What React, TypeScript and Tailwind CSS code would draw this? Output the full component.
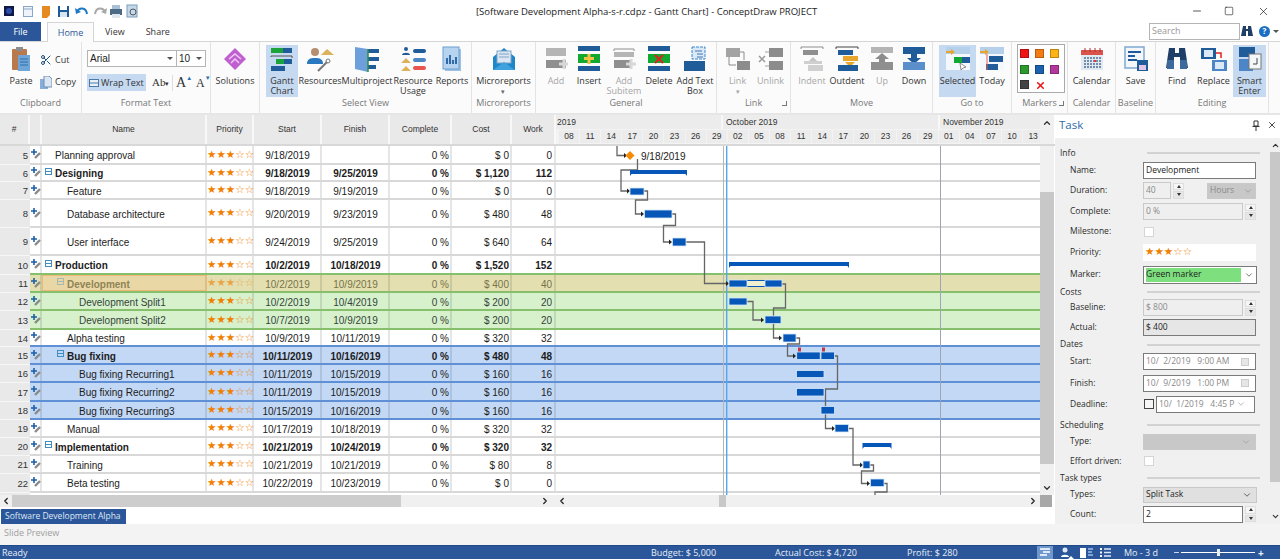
import type { ReactNode } from "react";
import { ChevronDown, ChevronLeft, ChevronRight, ChevronUp, Minus, Scissors, Square, X } from "lucide-react";

const navy = "#1f5c99";

const Ico = ({ w = 30, h = 26, children }: { w?: number; h?: number; children: ReactNode }) => (
	<svg width={w} height={h} viewBox={`0 0 ${w} ${h}`} className="shrink-0">
		{children}
	</svg>
);

const BigButton = ({ w, label, icon, active, muted }: { w: string; label: ReactNode; icon: ReactNode; active?: boolean; muted?: boolean }) => (
	<div className={`${w} h-[52px] flex flex-col items-center shrink-0 ${active ? "bg-[#c5d9f1]" : ""}`}>
		<div className="h-[27px] flex items-center justify-center">{icon}</div>
		<div className={`mt-[4px] text-center leading-[10px] whitespace-nowrap ${muted ? "text-[#a6a6a6]" : "text-[#333]"}`}>{label}</div>
	</div>
);

const Group = ({ w, label, children, launcher, pad = "pl-[4px]" }: { w: string; label: string; children: ReactNode; launcher?: boolean; pad?: string }) => (
	<div className={`${w} shrink-0 h-full flex flex-col border-r border-[#e3e3e3] relative`}>
		<div className={`h-[55px] flex pt-[3px] ${pad}`}>{children}</div>
		<div className="text-center text-[#777] leading-[12px]">{label}</div>
		{launcher && <div className="absolute right-[3px] bottom-[7px] w-[5px] h-[5px] border-r border-b border-[#777]" />}
	</div>
);

const MarkerDot = ({ c }: { c: string }) => <div className={`w-[9px] h-[9px] border border-black/25 ${c}`} />;

const Ribbon = () => (
	<div className="h-[71px] flex bg-[#fbfbfb] text-[9px] font-['Open_Sans',sans-serif]">
		<Group w="w-[82px]" label="Clipboard" pad="pl-[2px]">
			<BigButton
				w="w-[38px]"
				label="Paste"
				icon={
					<Ico w={22} h={26}>
						<rect x="2" y="3" width="15" height="21" rx="1" fill="#b9794c" />
						<rect x="6" y="1" width="7" height="4" fill="#8d8d8d" />
						<rect x="8" y="9" width="12" height="16" fill="#6fa5d8" />
						<path d="M10 13h8M10 16h8M10 19h8" stroke="#2f6ca8" />
					</Ico>
				}
			/>
			<div className="flex flex-col gap-[8px] pt-[8px] text-[#333]">
				<div className="flex items-center gap-[3px] h-[14px]">
					<Scissors size={12} className="text-[#1f4f80]" />
					<span>Cut</span>
				</div>
				<div className="flex items-center gap-[3px] h-[14px]">
					<Ico w={12} h={13}>
						<rect x="0" y="3" width="8" height="10" fill="#87aedb" />
						<path d="M4 0h5l3 3v8H4z" fill="#dbe6f2" stroke="#6e8fb3" />
					</Ico>
					<span>Copy</span>
				</div>
			</div>
		</Group>
		<Group w="w-[129px]" label="Format Text" pad="pl-[5px]">
			<div className="flex flex-col">
				<div className="mt-[5px] w-[119px] h-[17px] flex border border-[#b5b5b5] bg-white font-['Liberation_Sans',sans-serif] text-[10px] text-[#222]">
					<div className="w-[89px] flex items-center justify-between pl-[2px] pr-[3px] border-r border-[#b5b5b5]">
						Arial
						<span className="border-x-[3px] border-t-[3px] border-x-transparent border-t-[#555]" />
					</div>
					<div className="flex-1 flex items-center justify-between pl-[2px] pr-[3px]">
						10
						<span className="border-x-[3px] border-t-[3px] border-x-transparent border-t-[#555]" />
					</div>
				</div>
				<div className="mt-[7px] h-[17px] flex items-center text-[#333]">
					<div className="w-[59px] h-full bg-[#c5d9f1] flex items-center gap-[1px] pl-[2px] text-[9px] whitespace-nowrap">
						<Ico w={11} h={10}>
							<rect x="0.5" y="1.5" width="9" height="7" fill="#e8f0f8" stroke="#4d7aa8" />
							<path d="M1 5h8" stroke="#4d7aa8" />
						</Ico>
						Wrap Text
					</div>
					<span className="ml-[6px] font-['Liberation_Serif',serif] text-[11px] w-[18px]">Ab<span className="text-[7px]">▾</span></span>
					<div className="w-px h-[16px] bg-[#ddd] ml-[2px]" />
					<span className="ml-[3px] font-['Liberation_Serif',serif] text-[14px] leading-none">A</span>
					<span className="text-[6px] text-[#2b6cb0] -mt-[8px]">▲</span>
					<span className="ml-[4px] font-['Liberation_Serif',serif] text-[12px] leading-none">A</span>
					<span className="text-[6px] text-[#2b6cb0] -mt-[8px]">▼</span>
				</div>
			</div>
		</Group>
		<Group w="w-[49px]" label="" pad="pl-0">
			<BigButton
				w="w-full"
				label="Solutions"
				icon={
					<Ico w={22} h={22}>
						<path d="M11 0l11 11-11 11L0 11z" fill="#bf5fd0" />
						<path d="M5 11l6-5 6 5M7 15l4-4 4 4" stroke="#f0c9f6" strokeWidth="1.5" fill="none" />
					</Ico>
				}
			/>
		</Group>
		<Group w="w-[212px]" label="Select View" pad="pl-[6px]">
			<BigButton
				w="w-[32px]"
				active
				label={<>Gantt<br />Chart</>}
				icon={
					<Ico w={24} h={26}>
						<rect x="1" y="2" width="21" height="5" fill={navy} />
						<rect x="1" y="2" width="12" height="5" fill="#1aa33a" />
						<path d="M1 11v-1h21v2" stroke="#555" fill="none" />
						<rect x="6" y="13" width="16" height="5" fill={navy} />
						<rect x="6" y="13" width="8" height="5" fill="#1aa33a" />
						<rect x="1" y="20" width="14" height="5" fill={navy} />
					</Ico>
				}
			/>
			<BigButton
				w="w-[44px]"
				label="Resources"
				icon={
					<Ico w={28} h={26}>
						<circle cx="9" cy="6" r="4" fill="#b58d6f" />
						<path d="M1 18c0-5 3-6 8-6s8 1 8 6z" fill="#2a78c0" />
						<path d="M15 9l6-6 7 6z" fill="#dcb25a" />
						<path d="M12 25l9-9" stroke="#777" strokeWidth="2" />
						<circle cx="22" cy="15" r="2" fill="none" stroke="#777" />
					</Ico>
				}
			/>
			<BigButton
				w="w-[50px]"
				label="Multiproject"
				icon={
					<Ico w={26} h={26}>
						<rect x="13" y="3" width="12" height="4" fill={navy} />
						<rect x="13" y="11" width="12" height="4" fill={navy} />
						<rect x="13" y="19" width="9" height="4" fill={navy} />
						<path d="M1 1l13 2v23L1 23z" fill="#6d9fdc" />
						<path d="M14 3v23" stroke="#2f8f45" strokeWidth="1.5" />
					</Ico>
				}
			/>
			<BigButton
				w="w-[42px]"
				label={<>Resource<br />Usage</>}
				icon={
					<Ico w={26} h={26}>
						<circle cx="6" cy="3" r="2" fill={navy} />
						<path d="M2 9c0-3 8-3 8 0z" fill={navy} />
						<path d="M1 17l5-5 5 5zM1 25l5-5 5 5z" fill="#dcb25a" />
						<rect x="13" y="3" width="13" height="4" rx="2" fill={navy} />
						<rect x="13" y="12" width="13" height="4" rx="2" fill="#4c86c6" />
						<rect x="13" y="20" width="13" height="4" rx="2" fill="#e8564f" />
					</Ico>
				}
			/>
			<BigButton
				w="w-[36px]"
				label="Reports"
				icon={
					<Ico w={20} h={26}>
						<rect x="3" y="3" width="16" height="22" fill="#9ec0e4" />
						<rect x="1" y="1" width="16" height="22" fill="#b6d3ef" stroke="#6d9fd0" />
						<path d="M5 18v-6M8 18v-9M11 18v-4M14 18v-7" stroke="#2e6aa8" strokeWidth="2" />
					</Ico>
				}
			/>
		</Group>
		<Group w="w-[64px]" label="Microreports" pad="pl-0">
			<BigButton
				w="w-full"
				label={<>Microreports<br /><span className="text-[7px] text-[#666]">▾</span></>}
				icon={
					<Ico w={24} h={24}>
						<path d="M1 10L12 1l11 9v13H1z" fill="#1f86c8" />
						<rect x="5" y="4" width="14" height="12" fill="#dbe6f2" stroke="#7ea6c8" />
						<path d="M7 7h10M7 10h10" stroke="#7ea6c8" />
						<path d="M1 23l11-8 11 8z" fill="#3fa1dd" />
					</Ico>
				}
			/>
		</Group>
		<Group w="w-[181px]" label="General">
			<BigButton
				w="w-[32px]"
				muted
				label="Add"
				icon={
					<Ico w={24} h={24}>
						<rect x="2" y="1" width="20" height="8" fill="#b5b5b5" />
						<rect x="2" y="13" width="20" height="8" fill="#8f8f8f" />
						<path d="M20 12v10M15 17h10" stroke="#d8d8d8" strokeWidth="3" />
					</Ico>
				}
			/>
			<BigButton
				w="w-[34px]"
				label="Insert"
				icon={
					<Ico w={24} h={26}>
						<rect x="1" y="0" width="22" height="5" fill={navy} />
						<rect x="1" y="8" width="22" height="9" fill="#12a930" />
						<rect x="1" y="20" width="22" height="5" fill={navy} />
						<path d="M12 8v10M7 12.5h10" stroke="#f5c242" strokeWidth="3" />
					</Ico>
				}
			/>
			<BigButton
				w="w-[36px]"
				muted
				label={<>Add<br />Subitem</>}
				icon={
					<Ico w={24} h={24}>
						<path d="M2 4V2h20v2" stroke="#8f8f8f" fill="none" />
						<rect x="2" y="5" width="20" height="5" fill="#b5b5b5" />
						<rect x="2" y="13" width="16" height="8" fill="#8f8f8f" />
						<path d="M19 12v10M14 17h10" stroke="#d8d8d8" strokeWidth="3" />
					</Ico>
				}
			/>
			<BigButton
				w="w-[34px]"
				label="Delete"
				icon={
					<Ico w={24} h={26}>
						<rect x="1" y="0" width="22" height="5" fill={navy} />
						<rect x="1" y="8" width="22" height="9" fill="#12a930" />
						<rect x="1" y="20" width="22" height="5" fill={navy} />
						<path d="M8 9l8 8M16 9l-8 8" stroke="#e32020" strokeWidth="2" />
					</Ico>
				}
			/>
			<BigButton
				w="w-[38px]"
				label={<>Add Text<br />Box</>}
				icon={
					<Ico w={24} h={26}>
						<rect x="9" y="1" width="13" height="12" fill="#dbe9f6" stroke="#3c86d0" strokeDasharray="3 1" />
						<path d="M12 5h7M14 8h6M14 11h6" stroke="#3c78b0" />
						<rect x="1" y="15" width="21" height="10" fill={navy} />
					</Ico>
				}
			/>
		</Group>
		<Group w="w-[74px]" label="Link" launcher pad="pl-[4px]">
			<BigButton
				w="w-[33px]"
				muted
				label={<>Link<br /><span className="text-[7px]">▾</span></>}
				icon={
					<Ico w={26} h={26}>
						<rect x="1" y="2" width="14" height="9" fill="#a3a3a3" />
						<rect x="12" y="15" width="13" height="9" fill="#8c8c8c" />
						<path d="M15 6h4v8M4 11v8h7" stroke="#8c8c8c" fill="none" />
					</Ico>
				}
			/>
			<BigButton
				w="w-[33px]"
				muted
				label="Unlink"
				icon={
					<Ico w={26} h={26}>
						<rect x="11" y="2" width="14" height="9" fill="#8c8c8c" />
						<rect x="11" y="15" width="14" height="9" fill="#8c8c8c" />
						<path d="M1 10l6 6M7 10l-6 6" stroke="#9a9a9a" strokeWidth="1.5" />
						<path d="M11 6H7M11 20H7" stroke="#a3a3a3" />
					</Ico>
				}
			/>
		</Group>
		<Group w="w-[142px]" label="Move">
			<BigButton
				w="w-[34px]"
				muted
				label="Indent"
				icon={
					<Ico w={24} h={26}>
						<path d="M1 3V1h22v2" stroke="#8f8f8f" fill="none" />
						<rect x="3" y="4" width="15" height="5" fill="#8f8f8f" />
						<rect x="8" y="19" width="15" height="6" fill="#d0d0d0" />
						<path d="M13 11l5 5H8z" fill="#c4c4c4" />
						<rect x="4" y="15" width="18" height="3" fill="#cfcfcf" />
					</Ico>
				}
			/>
			<BigButton
				w="w-[36px]"
				label="Outdent"
				icon={
					<Ico w={24} h={26}>
						<path d="M1 3V1h22v2" stroke="#444" fill="none" />
						<rect x="3" y="4" width="15" height="5" fill={navy} />
						<rect x="8" y="10" width="15" height="5" fill="#e8a52c" />
						<path d="M15 21l-5-5h10z" fill="#e8a52c" />
						<rect x="3" y="19" width="20" height="6" fill={navy} />
					</Ico>
				}
			/>
			<BigButton
				w="w-[34px]"
				muted
				label="Up"
				icon={
					<Ico w={24} h={24}>
						<rect x="1" y="0" width="22" height="6" fill="#b5b5b5" />
						<path d="M12 6l7 6h-4v4H9v-4H5z" fill="#8c8c8c" />
						<rect x="1" y="15" width="22" height="8" fill="#8f8f8f" />
					</Ico>
				}
			/>
			<BigButton
				w="w-[30px]"
				label="Down"
				icon={
					<Ico w={24} h={24}>
						<rect x="1" y="0" width="22" height="7" fill={navy} />
						<path d="M12 17l7-6h-4V7H9v4H5z" fill={navy} />
						<rect x="1" y="15" width="22" height="8" fill="#5a8fcb" />
					</Ico>
				}
			/>
		</Group>
		<Group w="w-[79px]" label="Go to" pad="pl-[6px]">
			<BigButton
				w="w-[37px]"
				active
				label="Selected"
				icon={
					<Ico w={26} h={26}>
						<rect x="1" y="1" width="24" height="23" fill="#f4f7fb" />
						<rect x="1" y="1" width="24" height="7" fill="#b5d0ea" />
						<path d="M1 5h5V3l4 3-4 3V7H1z" fill="#e8a52c" />
						<rect x="9" y="11" width="16" height="6" fill={navy} />
						<rect x="9" y="11" width="8" height="6" fill="#12a930" />
						<path d="M15 17l1 7 2-2 3-1z" fill="#fff" stroke="#444" strokeWidth="0.6" />
					</Ico>
				}
			/>
			<BigButton
				w="w-[32px]"
				label="Today"
				icon={
					<Ico w={26} h={26}>
						<rect x="1" y="1" width="24" height="23" fill="#f4f7fb" />
						<rect x="1" y="1" width="24" height="7" fill="#b5d0ea" />
						<path d="M1 5h5V3l4 3-4 3V7H1z" fill="#e8a52c" />
						<rect x="10" y="10" width="14" height="6" fill={navy} />
						<rect x="7" y="18" width="12" height="6" fill={navy} />
						<path d="M8 8v16" stroke="#e8604f" />
					</Ico>
				}
			/>
		</Group>
		<Group w="w-[56px]" label="Markers" launcher pad="pl-[5px]">
			<div className="w-[48px] h-[49px] border border-[#aaa] bg-white grid grid-cols-[15px_15px_15px] gap-y-[6px] pl-[2px] pt-[4px] -mt-[1px]">
				<MarkerDot c="bg-[#f01414]" />
				<MarkerDot c="bg-[#f47c14]" />
				<MarkerDot c="bg-[#fbb414]" />
				<MarkerDot c="bg-[#2e9a2e]" />
				<MarkerDot c="bg-[#1c62ae]" />
				<MarkerDot c="bg-[#b4389c]" />
				<MarkerDot c="bg-[#444]" />
				<X size={11} strokeWidth={3.5} className="text-[#e81818]" />
			</div>
		</Group>
		<Group w="w-[48px]" label="Calendar" pad="pl-0">
			<BigButton
				w="w-full"
				label="Calendar"
				icon={
					<Ico w={24} h={24}>
						<rect x="1" y="3" width="22" height="20" fill="#e3e9f1" />
						<rect x="1" y="3" width="22" height="5" fill="#d9534a" />
						<path d="M5 1v4M10 1v4M15 1v4M20 1v4" stroke="#a33" />
						<path d="M4 11h17M4 14h17M4 17h17M4 20h17" stroke="#4f6f98" strokeWidth="1.6" strokeDasharray="2 1" />
						<rect x="14" y="13" width="2" height="2" fill="#e33" />
					</Ico>
				}
			/>
		</Group>
		<Group w="w-[40px]" label="Baseline" pad="pl-0">
			<BigButton
				w="w-full"
				label="Save"
				icon={
					<Ico w={24} h={26}>
						<rect x="1" y="1" width="19" height="21" fill="#f3f7fb" stroke="#7fa9cf" strokeWidth="1.5" />
						<path d="M4 6h13M4 10h7M4 14h9" stroke={navy} strokeWidth="2" />
						<rect x="13" y="14" width="11" height="11" fill={navy} />
						<rect x="15" y="19" width="7" height="5" fill="#e2c6e8" />
					</Ico>
				}
			/>
		</Group>
		<Group w="w-[113px]" label="Editing">
			<BigButton
				w="w-[34px]"
				label="Find"
				icon={
					<Ico w={22} h={24}>
						<path d="M3 1h6v5h4V1h6l3 20h-8V10h-6v11H0z" fill="#1f3f66" />
						<rect x="1" y="13" width="7" height="9" fill="#3d6a9c" />
						<rect x="14" y="13" width="7" height="9" fill="#3d6a9c" />
					</Ico>
				}
			/>
			<BigButton
				w="w-[39px]"
				label="Replace"
				icon={
					<Ico w={26} h={24}>
						<rect x="0" y="1" width="15" height="11" fill={navy} />
						<rect x="3" y="3" width="9" height="7" fill="#dbe9f6" />
						<rect x="11" y="13" width="15" height="11" fill="#4c86c6" />
						<rect x="14" y="15" width="9" height="7" fill="#dbe9f6" />
						<path d="M15 6h5v5" stroke="#e32020" strokeWidth="1.5" fill="none" />
					</Ico>
				}
			/>
			<BigButton
				w="w-[33px]"
				active
				label={<>Smart<br />Enter</>}
				icon={
					<Ico w={24} h={26}>
						<rect x="1" y="1" width="16" height="10" fill={navy} />
						<rect x="1" y="13" width="14" height="12" fill="#4c86c6" />
						<rect x="11" y="8" width="12" height="15" fill="#f5f8fb" stroke="#777" />
						<path d="M19 12v6h-4" stroke="#444" fill="none" />
					</Ico>
				}
			/>
		</Group>
	</div>
);

const TopBar = () => (
	<div className="h-[22px] flex items-center relative font-['Open_Sans',sans-serif]">
		<div className="flex items-center pl-[4px] gap-[6px]">
			<Ico w={134} h={14}>
				<rect x="0" y="2" width="10" height="10" fill="#101a4a" />
				<circle cx="5" cy="7" r="3" fill="#2c4da8" />
				<rect x="19.5" y="2.5" width="9" height="10" fill="#eef4fa" stroke="#8aa8c6" />
				<path d="M20 5h8" stroke="#8aa8c6" />
				<path d="M38 2h8v9l-3 3h-5z" fill="#e58a22" />
				<rect x="54" y="2" width="11" height="11" fill="#1d5a9c" />
				<rect x="56" y="2" width="7" height="4" fill="#fff" />
				<rect x="56" y="8" width="7" height="5" fill="#d8e4f0" />
				<path d="M73 8c2-5 9-5 10 2" stroke="#1f7ac4" strokeWidth="2" fill="none" />
				<path d="M71 4l1 6 5-2z" fill="#1f7ac4" />
				<path d="M101 8c-2-5-9-5-10 2" stroke="#a8a8a8" strokeWidth="2" fill="none" />
				<path d="M103 4l-1 6-5-2z" fill="#a8a8a8" />
				<rect x="106" y="5" width="12" height="6" fill="#4c6a86" />
				<rect x="108" y="1" width="8" height="4" fill="#a9c0d6" />
				<rect x="108" y="10" width="8" height="4" fill="#dde6ee" />
				<rect x="123" y="1" width="10" height="12" fill="#c4d8ec" stroke="#7e9cba" />
				<circle cx="129" cy="8" r="3" fill="none" stroke="#555" />
			</Ico>
		</div>
		<div className="absolute left-[476px] top-[5px] text-[9.5px] text-[#222] whitespace-nowrap">
			[Software Development Alpha-s-r.cdpz - Gantt Chart] - ConceptDraw PROJECT
		</div>
		<div className="ml-auto flex items-center gap-[21px] pr-[10px] text-[#222]">
			<Minus size={12} strokeWidth={1.5} />
			<Square size={10} strokeWidth={1.5} className="mr-[2px]" />
			<X size={13} strokeWidth={1.3} />
		</div>
	</div>
);

const Tabs = () => (
	<div className="h-[20px] flex items-end border-b border-[#d5d5d5] font-['Open_Sans',sans-serif] text-[9px] text-[#333] relative">
		<div className="w-[41px] h-[19px] bg-[#2b579a] text-white flex items-center justify-center">File</div>
		<div className="ml-[6px] w-[47px] h-[20px] -mb-px bg-[#fbfbfb] border-x border-t border-[#d5d5d5] flex items-center justify-center text-[#2b579a]">Home</div>
		<div className="ml-[11px] h-[19px] flex items-center">View</div>
		<div className="ml-[21px] h-[19px] flex items-center">Share</div>
		<div className="ml-auto flex items-center h-[18px] mb-[1px] pr-[1px]">
			<div className="w-[91px] h-[17px] border border-[#b5b5b5] text-[#999] pl-[2px] flex items-center">Search</div>
			<Ico w={14} h={12}>
				<path d="M3 1h3v3h2V1h3l2 10H8V6H6v5H1z" fill="#1f3f66" />
			</Ico>
			<div className="ml-[5px] w-[11px] h-[11px] rounded-full bg-[#1a6fc4] text-white text-[8px] font-bold flex items-center justify-center">?</div>
			<span className="ml-[3px] border-x-[3px] border-t-[3px] border-x-transparent border-t-[#555]" />
		</div>
	</div>
);

type Task = {
	n: number;
	name: string;
	level: number;
	start: string;
	finish: string;
	cost: string;
	work: string;
	bold?: boolean;
	minus?: boolean;
	h: string;
	tone?: "dev" | "green" | "blue";
	line?: string;
};

const tasks: Task[] = [
	{ n: 5, name: "Planning approval", level: 0, start: "9/18/2019", finish: "", cost: "$ 0", work: "0", h: "h-[19px]" },
	{ n: 6, name: "Designing", level: 0, start: "9/18/2019", finish: "9/25/2019", cost: "$ 1,120", work: "112", bold: true, minus: true, h: "h-[17px]" },
	{ n: 7, name: "Feature", level: 1, start: "9/18/2019", finish: "9/19/2019", cost: "$ 0", work: "0", h: "h-[18px]" },
	{ n: 8, name: "Database architecture", level: 1, start: "9/20/2019", finish: "9/23/2019", cost: "$ 480", work: "48", h: "h-[28px]" },
	{ n: 9, name: "User interface", level: 1, start: "9/24/2019", finish: "9/25/2019", cost: "$ 640", work: "64", h: "h-[28px]" },
	{ n: 10, name: "Production", level: 0, start: "10/2/2019", finish: "10/18/2019", cost: "$ 1,520", work: "152", bold: true, minus: true, h: "h-[19px]", line: "border-[#86c06c]" },
	{ n: 11, name: "Development", level: 1, start: "10/2/2019", finish: "10/9/2019", cost: "$ 400", work: "40", minus: true, h: "h-[18px]", tone: "dev", line: "border-[#86c06c]" },
	{ n: 12, name: "Development Split1", level: 2, start: "10/2/2019", finish: "10/4/2019", cost: "$ 200", work: "20", h: "h-[18px]", tone: "green", line: "border-[#86c06c]" },
	{ n: 13, name: "Development Split2", level: 2, start: "10/7/2019", finish: "10/9/2019", cost: "$ 200", work: "20", h: "h-[19px]", tone: "green", line: "border-[#86c06c]" },
	{ n: 14, name: "Alpha testing", level: 1, start: "10/9/2019", finish: "10/11/2019", cost: "$ 320", work: "32", h: "h-[17px]", line: "border-[#5f90d6]" },
	{ n: 15, name: "Bug fixing", level: 1, start: "10/11/2019", finish: "10/16/2019", cost: "$ 480", work: "48", bold: true, minus: true, h: "h-[18px]", tone: "blue", line: "border-[#5f90d6]" },
	{ n: 16, name: "Bug fixing Recurring1", level: 2, start: "10/11/2019", finish: "10/15/2019", cost: "$ 160", work: "16", h: "h-[18px]", tone: "blue", line: "border-[#5f90d6]" },
	{ n: 17, name: "Bug fixing Recurring2", level: 2, start: "10/11/2019", finish: "10/15/2019", cost: "$ 160", work: "16", h: "h-[19px]", tone: "blue", line: "border-[#5f90d6]" },
	{ n: 18, name: "Bug fixing Recurring3", level: 2, start: "10/15/2019", finish: "10/16/2019", cost: "$ 160", work: "16", h: "h-[18px]", tone: "blue", line: "border-[#5f90d6]" },
	{ n: 19, name: "Manual", level: 1, start: "10/17/2019", finish: "10/18/2019", cost: "$ 320", work: "32", h: "h-[18px]" },
	{ n: 20, name: "Implementation", level: 0, start: "10/21/2019", finish: "10/24/2019", cost: "$ 320", work: "32", bold: true, minus: true, h: "h-[18px]" },
	{ n: 21, name: "Training", level: 1, start: "10/21/2019", finish: "10/21/2019", cost: "$ 80", work: "8", h: "h-[18px]" },
	{ n: 22, name: "Beta testing", level: 1, start: "10/22/2019", finish: "10/23/2019", cost: "$ 0", work: "0", h: "h-[19px]" },
];

const Stars = ({ size = "text-[10.5px]" }: { size?: string }) => (
	<span className={`font-['DejaVu_Sans',sans-serif] ${size} text-[#f08000] whitespace-nowrap`}>★★★☆☆</span>
);

const TaskIcon = () => (
	<Ico w={11} h={11}>
		<path d="M4 0v6M1 3h6" stroke="#1d5fa8" strokeWidth="1.6" />
		<path d="M5 9l5-5" stroke="#8a8a8a" strokeWidth="2.4" />
	</Ico>
);

const Cell = ({ w, children, className = "" }: { w: string; children?: ReactNode; className?: string }) => (
	<div className={`${w} shrink-0 h-full flex items-center border-r-2 border-black/10 ${className}`}>{children}</div>
);

const TaskRow = ({ t }: { t: Task }) => {
	const bg = t.tone === "dev" ? "bg-[#e3dfb0]" : t.tone === "green" ? "bg-[#d7f1cd]" : t.tone === "blue" ? "bg-[#c2d8f5]" : "bg-white";
	const text = t.tone === "dev" ? "text-[#77734a]" : t.tone === "green" ? "text-[#35443a]" : "text-[#1c1c1c]";
	const line = t.line ?? "border-[#d8d8d8]";
	const indent = t.level === 0 ? "pl-[13px]" : t.level === 1 ? "pl-[25px]" : "pl-[37px]";
	const boxAt = t.level === 0 ? "left-[3px]" : "left-[15px]";
	return (
		<div className={`${t.h} flex`}>
			<div className="w-[30px] shrink-0 h-full bg-[#e9e9e9] border-b border-[#f6f6f6] flex items-center justify-end pr-[2px] pt-[2px] text-[#333] text-[9.5px]">{t.n}</div>
			<div className={`flex-1 flex h-full box-border border-b-2 ${line} ${bg} ${text} ${t.bold ? "font-bold" : ""}`}>
				<Cell w="w-[12px]" className="justify-center">
					<TaskIcon />
				</Cell>
				<Cell w="w-[165px]" className={`relative pt-[2px] ${indent} ${t.tone === "dev" ? "bg-[#e9d8a6] outline outline-1 -outline-offset-1 outline-[#f0b878] text-[#8f8355] font-bold" : ""}`}>
					{t.minus && (
						<span className={`absolute ${boxAt} top-1/2 -translate-y-[5px] w-[7px] h-[7px] border border-[#3f8fc4] flex items-center justify-center ${t.tone === "dev" ? "opacity-40" : ""}`}>
							<span className="w-[5px] h-px bg-[#3f8fc4]" />
						</span>
					)}
					<span className="whitespace-nowrap">{t.name}</span>
				</Cell>
				<Cell w="w-[47px]" className={`font-normal ${t.tone === "dev" ? "opacity-60" : ""}`}>
					<Stars />
				</Cell>
				<Cell w="w-[68px]" className="justify-center pt-[2px] pl-[1px]">{t.start}</Cell>
				<Cell w="w-[68px]" className="justify-center pt-[2px] pl-[1px]">{t.finish}</Cell>
				<Cell w="w-[62px]" className="justify-end pt-[2px] pr-[1px]">0 %</Cell>
				<Cell w="w-[60px]" className="justify-end pt-[2px] pr-[1px]">{t.cost}</Cell>
				<Cell w="w-[44px]" className="justify-end pt-[2px] pr-[2px]">{t.work}</Cell>
				<div className="flex-1" />
			</div>
		</div>
	);
};

const Bar = ({ x, y, w, h = 8 }: { x: number; y: number; w: number; h?: number }) => (
	<rect x={x} y={y} width={w} height={h} fill="#0757b8" stroke="#d6e8fb" strokeWidth="0.8" />
);

const Summary = ({ x, y, w }: { x: number; y: number; w: number }) => (
	<path d={`M${x} ${y}h${w}v6l-1.5 -2h${3 - w}l-1.5 2z`} fill="#0757b8" />
);

const links = [
	"M617 145V154.5H624",
	"M637.5 158V169H621V190H627",
	"M644 190H647.5V199H635.5V213H641",
	"M672 213H675.5V224.5H663.5V241H669",
	"M686 241H704.5V282.5H726",
	"M782 283H785.5V307H773.5V337H779",
	"M747 300.5H753V319H761",
	"M796 337H799.5V343H787.5V355H793",
	"M834.5 355H837.5V388H825.5V427.5H832",
	"M848.5 427.5H853V464H860",
	"M870 464H873.5V470H861.5V482.5H867",
	"M884 482.5H887V491H875V495",
];

const arrows = [
	[624, 154.5], [627, 190], [641, 213], [669, 241], [726, 282.5], [779, 337], [761, 319], [793, 355], [832, 427.5], [860, 464], [867, 482.5],
];

const Chart = () => (
	<svg width={498} height={349} viewBox="556 145 498 349" className="absolute left-[556px] top-0">
		<path d="M723.5 145V494" stroke="#b5b5b5" strokeWidth="1" />
		<path d="M940.5 145V494" stroke="#9ea3b5" strokeWidth="1" />
		<path d="M726.7 145V494" stroke="#55a8ee" strokeWidth="1.4" />
		{links.map((d) => (
			<path key={d} d={d} fill="none" stroke="#666" strokeWidth="1.3" />
		))}
		{arrows.map(([x, y]) => (
			<path key={x} d={`M${x} ${y - 2.5}l3 2.5-3 2.5z`} fill="#222" />
		))}
		<path d="M630 150l4.5 4.5-4.5 4.5-4.5-4.5z" fill="#f58a07" />
		<text x="641" y="158.5" fontFamily="Liberation Sans, sans-serif" fontSize="10" fill="#222">9/18/2019</text>
		<Summary x={630} y={169} w={57} />
		<Bar x={630} y={187} w={14} h={7} />
		<Bar x={644.5} y={209} w={27.5} />
		<Bar x={672.5} y={237} w={13.5} />
		<Summary x={729} y={261} w={120} />
		<rect x="746" y="279.5" width="20" height="6" fill="#f0efd0" stroke="#0757b8" strokeWidth="1" />
		<Bar x={729} y={279} w={18} h={7} />
		<Bar x={765} y={279} w={17} h={7} />
		<Bar x={729} y={297} w={18} h={7} />
		<Bar x={765} y={315} w={16} h={7.5} />
		<Bar x={783} y={333} w={13} />
		<Bar x={796.7} y={351} w={23.5} h={7.5} />
		<Bar x={821} y={351} w={13.5} h={7.5} />
		<rect x="798" y="346.5" width="3" height="4" fill="#c23a4a" />
		<rect x="822" y="346.5" width="3" height="4" fill="#c23a4a" />
		<Bar x={796.5} y={369.5} w={27.5} h={7} />
		<Bar x={796.5} y={387.5} w={27.5} h={7.5} />
		<Bar x={821} y={405.5} w={13.5} h={7.5} />
		<Bar x={835} y={423.5} w={13.5} h={7.5} />
		<Summary x={862.5} y={442} w={29} />
		<Bar x={863} y={460} w={7} h={7.5} />
		<Bar x={870.5} y={478} w={13.5} h={7.5} />
	</svg>
);

const ticks = ["08", "11", "14", "17", "20", "23", "26", "29", "02", "05", "08", "11", "14", "17", "20", "23", "26", "29", "01", "04", "07", "10", "13"];

const HeaderCell = ({ w, label }: { w: string; label: string }) => (
	<div className={`${w} shrink-0 h-full bg-[#e9e9e9] border-r-2 border-[#f8f8f8] flex items-center justify-center`}>{label}</div>
);

const GridHeader = () => (
	<div className="h-[31px] flex text-[8.5px] text-[#333] border-b-2 border-[#d8d8d8] box-border">
		<HeaderCell w="w-[30px]" label="#" />
		<HeaderCell w="w-[12px]" label="" />
		<HeaderCell w="w-[165px]" label="Name" />
		<HeaderCell w="w-[47px]" label="Priority" />
		<HeaderCell w="w-[68px]" label="Start" />
		<HeaderCell w="w-[68px]" label="Finish" />
		<HeaderCell w="w-[62px]" label="Complete" />
		<HeaderCell w="w-[60px]" label="Cost" />
		<HeaderCell w="w-[44px]" label="Work" />
		<div className="w-[484px] shrink-0 bg-[#f3f3f3] flex flex-col text-[8.5px]">
			<div className="h-[14px] flex items-center bg-[#ececec]">
				<span className="w-[167px] border-r-2 border-[#f8f8f8] h-full flex items-center pl-[1px]">2019</span>
				<span className="w-[217px] border-r-2 border-[#f8f8f8] h-full flex items-center pl-[3px]">October 2019</span>
				<span className="pl-[3px]">November 2019</span>
			</div>
			<div className="flex-1 flex pl-[3px] gap-[1px] items-stretch py-[1px]">
				{ticks.map((t, i) => (
					<span key={i} className="w-[20.1px] shrink-0 bg-[#ececec] flex items-center justify-center">{t}</span>
				))}
			</div>
		</div>
		<div className="w-[14px] bg-[#f0f0f0] flex justify-center pt-[3px]">
			<ChevronUp size={10} strokeWidth={3} className="text-[#333]" />
		</div>
	</div>
);

const Scrollbars = () => (
	<div className="h-[12px] flex text-[#222]">
		<div className="w-[556px] bg-[#cdcdcd] flex justify-between items-center">
			<div className="w-[12px] h-full bg-[#f0f0f0] flex items-center justify-center">
				<ChevronLeft size={10} strokeWidth={3} />
			</div>
			<div className="w-[155px] h-full bg-[#f0f0f0] flex items-center justify-end pr-[6px]">
				<ChevronRight size={10} strokeWidth={3} />
			</div>
		</div>
		<div className="w-[484px] bg-[#f0f0f0] flex items-center">
			<ChevronLeft size={10} strokeWidth={3} className="ml-[1px]" />
			<div className="ml-[152px] w-[7px] h-full bg-[#c8c8c8]" />
			<ChevronRight size={10} strokeWidth={3} className="ml-auto mr-[2px]" />
		</div>
		<div className="w-[12px] bg-[#a8a8a8]" />
	</div>
);

const Spin = () => (
	<div className="ml-[2px] w-[11px] h-[16px] flex flex-col gap-[1px] text-[#333]">
		<div className="flex-1 bg-[#f6f6f6] border border-[#ddd] flex items-center justify-center">
			<span className="border-x-[2px] border-b-[3px] border-x-transparent border-b-[#333]" />
		</div>
		<div className="flex-1 bg-[#e6e6e6] border border-[#ddd] flex items-center justify-center">
			<span className="border-x-[2px] border-t-[3px] border-x-transparent border-t-[#333]" />
		</div>
	</div>
);

const Heading = ({ label, h, pt = "" }: { label: string; h: string; pt?: string }) => (
	<div className={`${h} ${pt} flex items-center pl-[5px]`}>
		<span className="w-[87px] shrink-0">{label}</span>
		<span className="w-[113px] h-[2px] bg-[#d2d2d2]" />
	</div>
);

const Field = ({ label, h, children }: { label: string; h: string; children?: ReactNode }) => (
	<div className={`${h} flex items-center pl-[15px]`}>
		<span className="w-[73px] shrink-0 whitespace-nowrap">{label}</span>
		{children}
	</div>
);

const Box = ({ w, h = "h-[17px]", dark, bg = "bg-[#efefef]", dim = true, children }: { w: string; h?: string; dark?: boolean; bg?: string; dim?: boolean; children?: ReactNode }) => (
	<div className={`${w} ${h} ${bg} border ${dark ? "border-[#7a7a7a]" : "border-[#c9c9c9]"} ${dim ? "text-[#8a8a8a]" : "text-[#222]"} flex items-center pl-[2px] whitespace-nowrap`}>{children}</div>
);

const Check = ({ dark }: { dark?: boolean }) => <div className={`ml-[1px] w-[10px] h-[10px] ${dark ? "border border-[#444] bg-[#f6f6f6]" : "border border-[#d5d5d5] bg-white"}`} />;

const Drop = ({ className = "" }: { className?: string }) => <ChevronDown size={10} strokeWidth={1.6} className={`ml-auto mr-[2px] shrink-0 ${className}`} />;

const TaskPanel = () => (
	<div className="w-[225px] shrink-0 flex flex-col bg-[#f0f0f0] overflow-hidden font-['Open_Sans',sans-serif] text-[8.5px] text-[#2b2b2b]">
		<div className="h-[23px] shrink-0 bg-white flex items-center pl-[4px] pr-[3px] pb-[3px]">
			<span className="text-[11.5px] text-[#2b6ca8]">Task</span>
			<svg width="8" height="11" viewBox="0 0 8 11" className="ml-auto mr-[7px]">
				<path d="M2 1h4v5H2zM0.5 6.5h7M4 6.5V11" stroke="#333" fill="none" />
			</svg>
			<X size={10} strokeWidth={2} className="text-[#222]" />
		</div>
		<div className="flex flex-1 min-h-0">
			<div className="flex-1 pt-[8px]">
				<Heading label="Info" h="h-[14px]" />
				<Field label="Name:" h="h-[20px]">
					<Box w="w-[113px]" dark bg="bg-white" dim={false}>Development</Box>
				</Field>
				<Field label="Duration:" h="h-[21px]">
					<Box w="w-[28px]">40</Box>
					<Spin />
					<Box w="w-[49px]" h="h-[16px]" bg="bg-[#c8c8c8] ml-[23px]">
						Hours
						<Drop />
					</Box>
				</Field>
				<Field label="Complete:" h="h-[21px]">
					<Box w="w-[100px]">0 %</Box>
					<Spin />
				</Field>
				<Field label="Milestone:" h="h-[19px]">
					<Check />
				</Field>
				<Field label="Priority:" h="h-[22px]">
					<div className="w-[113px] h-[17px] bg-white flex items-center pl-[2px]">
						<Stars />
					</div>
				</Field>
				<Field label="Marker:" h="h-[23px]">
					<div className="w-[114px] h-[18px] bg-white border border-[#7a7a7a] flex items-center pl-[2px]">
						<div className="w-[95px] h-[14px] bg-[#7ddf7d] text-[#222] flex items-center">Green marker</div>
						<Drop className="text-[#333]" />
					</div>
				</Field>
				<Heading label="Costs" h="h-[12px]" />
				<Field label="Baseline:" h="h-[19px]">
					<Box w="w-[100px]">$ 800</Box>
					<Spin />
				</Field>
				<Field label="Actual:" h="h-[21px]">
					<Box w="w-[113px]" dark bg="bg-[#e6e6e6]" dim={false}>$ 400</Box>
				</Field>
				<Heading label="Dates" h="h-[13px]" />
				<Field label="Start:" h="h-[21px]">
					<Box w="w-[113px]" dark bg="bg-white">
						10/&nbsp;&nbsp;2/2019&nbsp;&nbsp;&nbsp;9:00 AM
						<span className="ml-auto w-[8px] h-[8px] bg-[#e6e6e6] border border-[#ccc] mr-[6px]" />
					</Box>
				</Field>
				<Field label="Finish:" h="h-[22px]">
					<Box w="w-[113px]" dark bg="bg-white">
						10/&nbsp;&nbsp;9/2019&nbsp;&nbsp;&nbsp;1:00 PM
						<span className="ml-auto w-[8px] h-[8px] bg-[#e6e6e6] border border-[#ccc] mr-[6px]" />
					</Box>
				</Field>
				<Field label="Deadline:" h="h-[20px]">
					<Check dark />
					<Box w="w-[99px]" dark bg="bg-white ml-[2px]">
						10/&nbsp;&nbsp;1/2019&nbsp;&nbsp;&nbsp;4:45 P
						<Drop className="text-[#999] mr-[8px]" />
					</Box>
				</Field>
				<Heading label="Scheduling" h="h-[18px]" pt="pt-[4px]" />
				<Field label="Type:" h="h-[19px]">
					<Box w="w-[113px]" h="h-[16px]" bg="bg-[#c8c8c8]">
						<Drop className="text-[#999] mr-[4px]" />
					</Box>
				</Field>
				<Field label="Effort driven:" h="h-[20px]">
					<Check />
				</Field>
				<Heading label="Task types" h="h-[14px]" />
				<Field label="Types:" h="h-[19px]">
					<Box w="w-[114px]" h="h-[16px]" bg="bg-[#e0e0e0]" dim={false}>
						Split Task
						<Drop className="mr-[4px]" />
					</Box>
				</Field>
				<Field label="Count:" h="h-[20px]">
					<Box w="w-[100px]" dark bg="bg-white" dim={false}>2</Box>
					<Spin />
				</Field>
			</div>
			<div className="w-[10px] shrink-0 flex flex-col items-center">
				<ChevronUp size={9} strokeWidth={3} className="mt-[3px] text-[#333]" />
				<div className="w-full h-[330px] bg-[#c8c8c8] mt-[2px]" />
				<ChevronDown size={9} strokeWidth={3} className="mt-auto mb-[3px] text-[#333]" />
			</div>
		</div>
	</div>
);

const StatusBar = () => (
	<div className="h-[14px] bg-[#2b579a] border-t border-[#1f4a8a] flex items-center text-[#e8eef7] text-[9px] font-['Open_Sans',sans-serif] relative">
		<span className="w-[651px] pl-[2px]">Ready</span>
		<span className="w-[124px]">Budget: $ 5,000</span>
		<span className="w-[132px]">Actual Cost: $ 4,720</span>
		<span className="w-[130px]">Profit: $ 280</span>
		<svg width="76" height="13" viewBox="0 0 76 13" className="shrink-0">
			<rect x="0" y="0" width="16" height="13" fill="#6f97cc" />
			<path d="M3 3h10M6 6h7M3 9h7" stroke="#dce8f7" strokeWidth="2" />
			<circle cx="28" cy="4" r="2.5" fill="#dce8f7" />
			<path d="M24 11c0-3 8-3 8 0zM31 13l3-3 3 3z" fill="#fff" />
			<path d="M43 2h6v10h-6z" fill="#fff" />
			<path d="M51 3h5M51 6h4M51 9h5" stroke="#9cc0ec" strokeWidth="1.5" />
			<path d="M63 3h2M63 6.5h2M63 10h2" stroke="#fff" strokeWidth="2" />
			<path d="M67 3h7M67 6.5h7M67 10h7" stroke="#dce8f7" strokeWidth="1.5" />
		</svg>
		<span className="ml-[11px] w-[49px] whitespace-nowrap">Mo - 3 d</span>
		<div className="flex items-center relative w-[92px]">
			<Minus size={7} strokeWidth={3} />
			<div className="ml-[1px] w-[74px] h-px bg-white relative">
				<div className="absolute left-[36px] -top-[3px] w-[3px] h-[7px] bg-[#e8eef7]" />
			</div>
			<span className="ml-[3px] font-bold text-[10px] leading-none">+</span>
		</div>
	</div>
);

export default function App() {
	return (
		<div className="w-[1280px] h-[559px] flex flex-col overflow-hidden bg-white font-['Liberation_Sans',sans-serif] text-[10px]">
			<TopBar />
			<Tabs />
			<Ribbon />
			<div className="h-[2px] bg-[#e6e6e6]" />
			<div className="h-[409px] flex">
				<div className="w-[1055px] shrink-0 flex flex-col">
					<GridHeader />
					<div className="h-[349px] relative overflow-hidden flex">
						<div className="w-[1040px] shrink-0">
							{tasks.map((t) => (
								<TaskRow key={t.n} t={t} />
							))}
							<div className="h-[2px] bg-white flex">
								<div className="w-[30px] bg-[#e9e9e9]" />
							</div>
						</div>
						<div className="w-[14px] shrink-0 bg-[#f0f0f0] flex flex-col">
							<div className="h-[46px]" />
							<div className="h-[272px] bg-[#c8c8c8]" />
							<div className="flex-1 flex items-end justify-center pb-[2px]">
								<ChevronDown size={10} strokeWidth={3} className="text-[#333]" />
							</div>
						</div>
						<div className="w-px bg-white" />
						<Chart />
					</div>
					<Scrollbars />
					<div className="h-[17px] flex items-center pl-[1px] pt-[1px] font-['Open_Sans',sans-serif]">
						<div className="h-[15px] w-[125px] bg-[#2b579a] text-[#dfe8f5] flex items-center pl-[4px] whitespace-nowrap text-[8.5px]">Software Development Alpha</div>
					</div>
				</div>
				<TaskPanel />
			</div>
			<div className="h-[21px] bg-[#f3f3f3] flex items-center pl-[4px] pb-[3px] text-[#a0a0a0] text-[9px] font-['Open_Sans',sans-serif]">Slide Preview</div>
			<StatusBar />
		</div>
	);
}
